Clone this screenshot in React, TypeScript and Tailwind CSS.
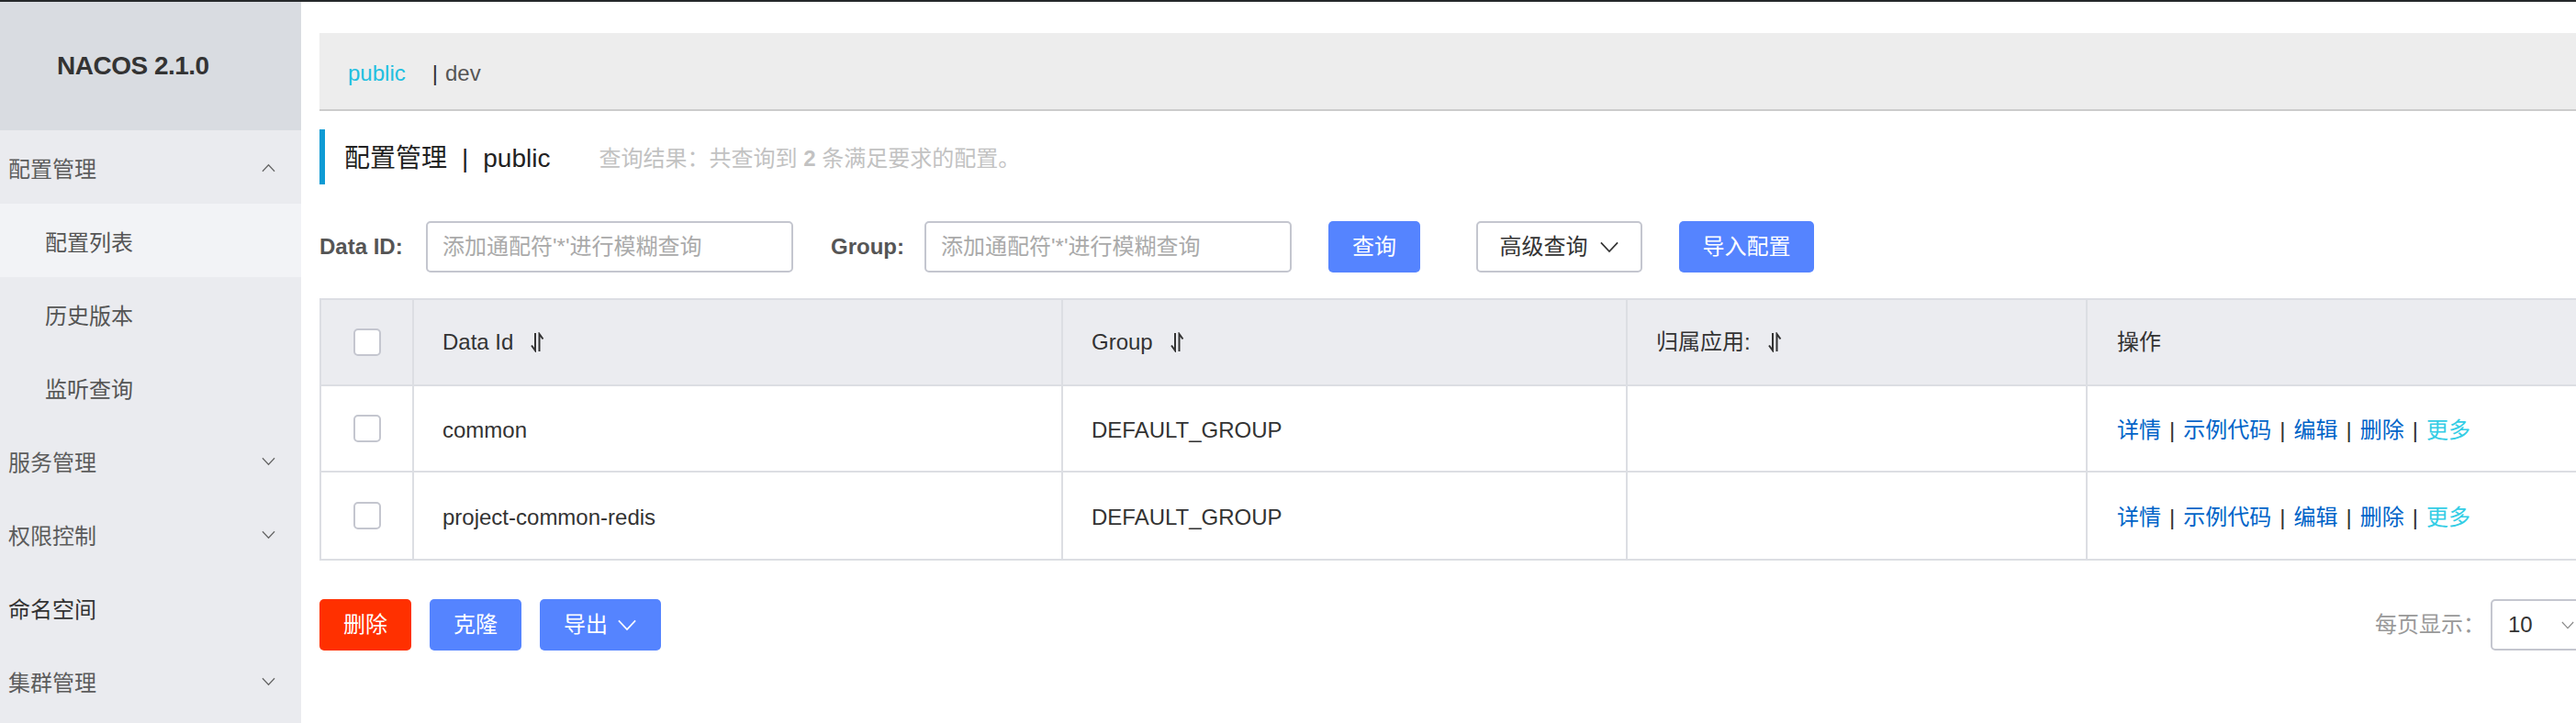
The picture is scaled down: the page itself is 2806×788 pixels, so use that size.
import React from "react";

const font = "font-['Liberation_Sans','Noto_Sans_CJK_SC',sans-serif]";

function Chevron({ up = false, className = "" }: { up?: boolean; className?: string }) {
  return (
    <svg viewBox="0 0 16 10" className={className} fill="none" stroke="currentColor" strokeWidth={1.3}>
      {up ? <path d="M1 9 L8 1.5 L15 9" /> : <path d="M1 1 L8 8.5 L15 1" />}
    </svg>
  );
}

function SortIcon() {
  return (
    <svg viewBox="0 0 16 22" className="w-[16px] h-[22px] ml-[18px] text-[#333]" fill="none" stroke="currentColor" strokeWidth={2}>
      <path d="M6 1 V20 L2 14.5" />
      <path d="M10.5 21 V2 L14.5 7.5" />
    </svg>
  );
}

function Checkbox() {
  return <div className="w-[30px] h-[30px] rounded-[5px] border-2 border-[#c4c6cf] bg-white" />;
}

const menu = [
  { label: "配置管理", chevron: "up", tone: "text-[#5c5c5c]" },
  { label: "配置列表", sub: true, active: true },
  { label: "历史版本", sub: true },
  { label: "监听查询", sub: true },
  { label: "服务管理", chevron: "down", tone: "text-[#5c5c5c]" },
  { label: "权限控制", chevron: "down", tone: "text-[#5c5c5c]" },
  { label: "命名空间", tone: "text-[#333]" },
  { label: "集群管理", chevron: "down", tone: "text-[#5c5c5c]" },
];

const rows = ["common", "project-common-redis"];

const cell = "border-r-2 border-[#dcdee3] flex items-center";

export default function App() {
  return (
    <div className={`w-[2806px] h-[788px] overflow-hidden flex flex-col bg-white ${font}`}>
      <div className="h-[2px] bg-[#25282b] shrink-0" />
      <div className="flex flex-1">
        {/* sidebar */}
        <aside className="w-[328px] shrink-0 bg-[#eaebef] flex flex-col">
          <div className="h-[140px] bg-[#d9dce1] flex items-center pl-[62px]">
            <span className="text-[28px] font-bold text-[#333] tracking-[-0.5px]">NACOS 2.1.0</span>
          </div>
          {menu.map((m) => (
            <div
              key={m.label}
              className={`h-[80px] flex items-center justify-between pr-[28px] pt-[6px] text-[24px] leading-none ${
                m.sub ? "pl-[49px] text-[#555]" : `pl-[9px] ${m.tone}`
              } ${m.active ? "bg-[#f2f3f6]" : ""}`}
            >
              <span>{m.label}</span>
              {m.chevron && (
                <Chevron up={m.chevron === "up"} className="w-[15px] h-[10px] text-[#666] -mt-[4px]" />
              )}
            </div>
          ))}
        </aside>

        {/* main */}
        <main className="w-[2518px] shrink-0 pl-5 text-[24px] leading-none">
          <div className="mt-[34px] h-[85px] bg-[#ededed] border-b-2 border-[#cccccc] flex items-center pl-[31px] pt-[5px]">
            <span className="text-[#22bfe0]">public</span>
            <span className="ml-[29px] text-[#333]">|</span>
            <span className="ml-[8px] text-[#555]">dev</span>
          </div>

          <div className="mt-[20px] h-[60px] border-l-[6px] border-[#0e9bd4] flex items-center pl-[21px] pt-[3px]">
            <span className="text-[28px] text-[#222]">配置管理</span>
            <span className="text-[28px] text-[#222] px-[16px]">|</span>
            <span className="text-[28px] text-[#222]">public</span>
            <span className="ml-[53px] text-[#c2c2c2]">
              查询结果：共查询到 <b className="font-bold">2</b> 条满足要求的配置。
            </span>
          </div>

          <div className="mt-[40px] h-[56px] flex items-center">
            <span className="font-bold text-[#555] w-[116px]">Data ID:</span>
            <div className="w-[400px] h-[56px] border-2 border-[#c4c6cf] rounded-[5px] flex items-center pl-[16px] text-[#aaa]">
              添加通配符'*'进行模糊查询
            </div>
            <span className="ml-[41px] font-bold text-[#555] w-[102px]">Group:</span>
            <div className="w-[400px] h-[56px] border-2 border-[#c4c6cf] rounded-[5px] flex items-center pl-[16px] text-[#aaa]">
              添加通配符'*'进行模糊查询
            </div>
            <button className="ml-[40px] w-[100px] h-[56px] rounded-[5px] bg-[#5584ff] text-white">查询</button>
            <button className="ml-[61px] w-[181px] h-[56px] rounded-[5px] border-2 border-[#c4c6cf] bg-white text-[#333] flex items-center justify-center gap-[12px]">
              高级查询
              <Chevron className="w-[22px] h-[13px]" />
            </button>
            <button className="ml-[40px] w-[147px] h-[56px] rounded-[5px] bg-[#5584ff] text-white">导入配置</button>
          </div>

          {/* table */}
          <div className="mt-[28px] border-2 border-r-0 border-[#dcdee3] text-[#333]">
            <div className="h-[94px] bg-[#ebecf0] flex border-b-2 border-[#dcdee3]">
              <div className={`${cell} w-[101px] justify-center`}>
                <Checkbox />
              </div>
              <div className={`${cell} w-[707px] pl-[31px]`}>
                Data Id
                <SortIcon />
              </div>
              <div className={`${cell} w-[615px] pl-[31px]`}>
                Group
                <SortIcon />
              </div>
              <div className={`${cell} w-[501px] pl-[31px]`}>
                归属应用:
                <SortIcon />
              </div>
              <div className="flex items-center pl-[32px] flex-1">操作</div>
            </div>
            {rows.map((r, i) => (
              <div
                key={r}
                className={`h-[94px] flex ${i < rows.length - 1 ? "border-b-2 border-[#dcdee3]" : ""}`}
              >
                <div className={`${cell} w-[101px] justify-center`}>
                  <Checkbox />
                </div>
                <div className={`${cell} w-[707px] pl-[31px] pt-[4px]`}>{r}</div>
                <div className={`${cell} w-[615px] pl-[31px] pt-[4px]`}>DEFAULT_GROUP</div>
                <div className={`${cell} w-[501px]`} />
                <div className="flex items-center pl-[32px] pt-[4px] flex-1 text-[#0064c8]">
                  <span>详情</span>
                  <span className="text-[#333] px-[9px]">|</span>
                  <span>示例代码</span>
                  <span className="text-[#333] px-[9px]">|</span>
                  <span>编辑</span>
                  <span className="text-[#333] px-[9px]">|</span>
                  <span>删除</span>
                  <span className="text-[#333] px-[9px]">|</span>
                  <span className="text-[#33cde5]">更多</span>
                </div>
              </div>
            ))}
          </div>

          <div className="mt-[42px] flex items-center justify-between">
            <div className="flex gap-[20px]">
              <button className="w-[100px] h-[56px] rounded-[5px] bg-[#ff3000] text-white">删除</button>
              <button className="w-[100px] h-[56px] rounded-[5px] bg-[#5584ff] text-white">克隆</button>
              <button className="w-[132px] h-[56px] rounded-[5px] bg-[#5584ff] text-white flex items-center justify-center gap-[10px]">
                导出
                <Chevron className="w-[22px] h-[13px]" />
              </button>
            </div>
            <div className="flex items-center">
              <span className="text-[#999]">每页显示：</span>
              <div className="ml-[6px] w-[133px] h-[56px] border-2 border-[#c4c6cf] rounded-[5px] flex items-center justify-between pl-[17px] pr-[40px] text-[#333]">
                10
                <Chevron className="w-[14px] h-[9px] text-[#888]" />
              </div>
            </div>
          </div>
        </main>
      </div>
    </div>
  );
}
